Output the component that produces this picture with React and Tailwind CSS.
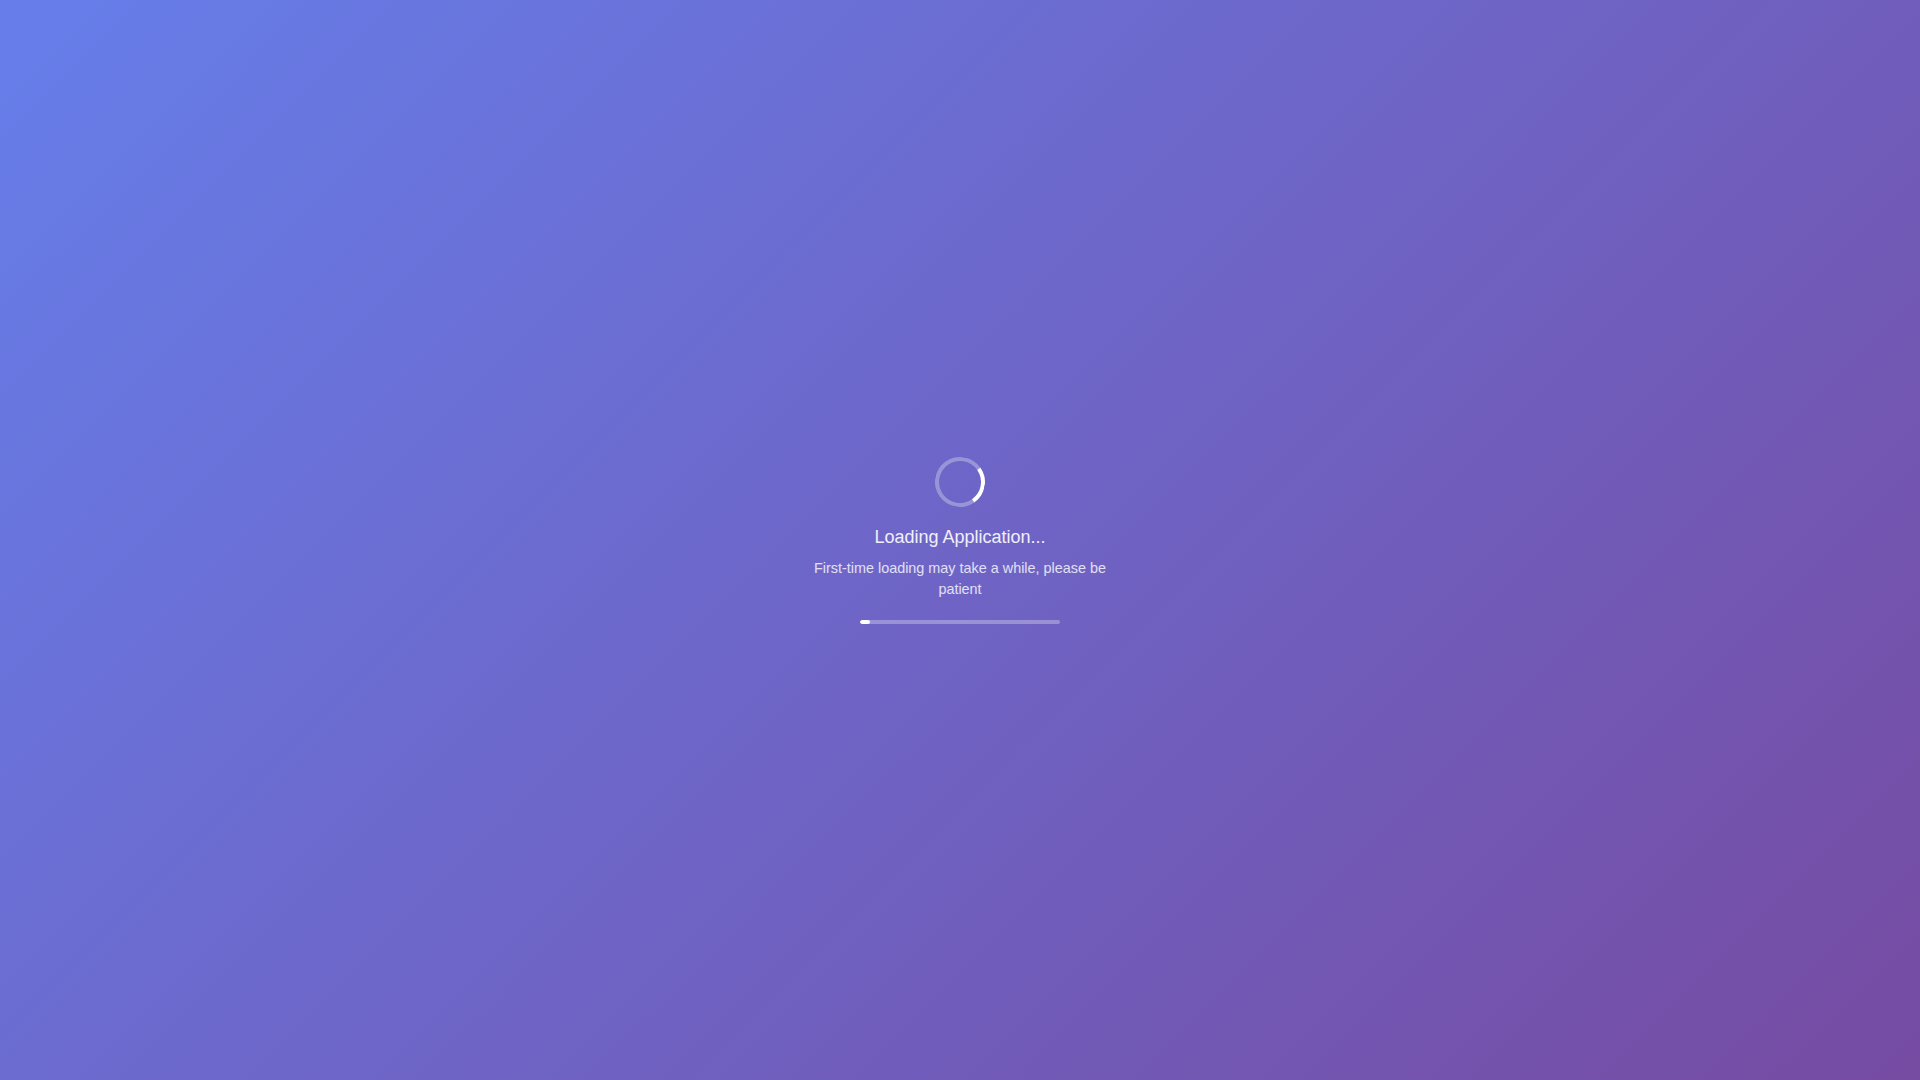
export default function App() {
  return (
    <div
      className="min-h-screen w-full flex items-center justify-center bg-[linear-gradient(135deg,#667eea_0%,#764ba2_100%)] text-white"
      style={{ fontFamily: '"Liberation Sans", Arial, sans-serif' }}
    >
      <div className="flex flex-col items-center text-center max-w-[300px]">
        {/* spinner */}
        <div className="w-[50px] h-[50px] rounded-full border-4 border-white/30 border-t-white rotate-[100deg] mb-[17px]" />
        <h2 className="text-lg leading-[27px] font-normal text-white/90">Loading Application...</h2>
        <p className="mt-[7px] text-[14.4px] leading-[21px] text-white/80">
          First-time loading may take a while, please be patient
        </p>
        <div className="mt-5 w-[200px] h-1 rounded-full bg-white/30 overflow-hidden">
          <div className="h-full w-[5%] rounded-full bg-white" />
        </div>
      </div>
    </div>
  );
}
